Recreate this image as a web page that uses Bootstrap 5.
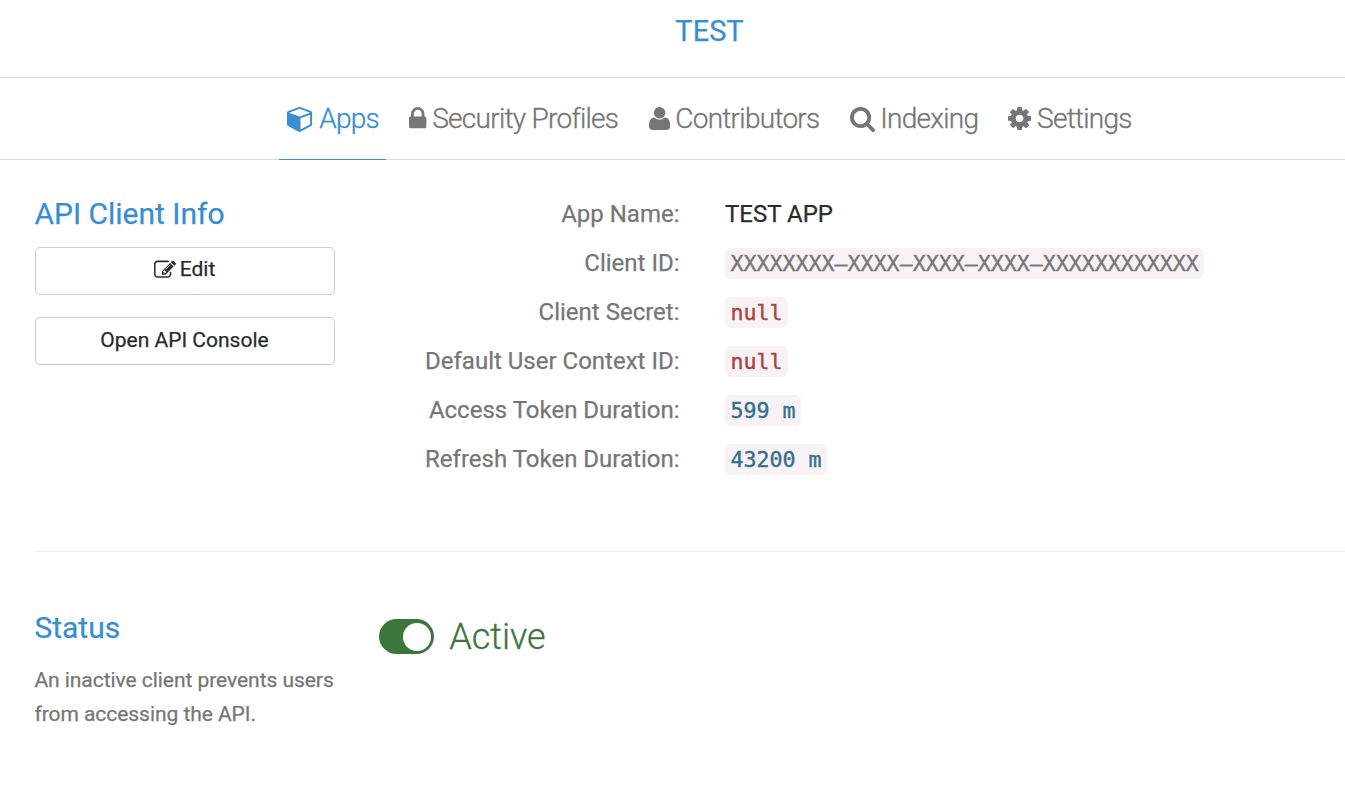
<!DOCTYPE html>
<html lang="en">
<head>
<meta charset="utf-8">
<meta name="viewport" content="width=device-width, initial-scale=1">
<title>API Client Info</title>
<link href="https://cdn.jsdelivr.net/npm/bootstrap@5.3.0/dist/css/bootstrap.min.css" rel="stylesheet">
<style>
body{font-family:Roboto,"Liberation Sans",sans-serif;color:#767676;font-size:24px;-webkit-text-stroke:.25px}
.topbar{height:78px;border-bottom:1px solid #ddd;padding-left:74px;padding-top:1px;font-size:29px;line-height:61px}
.brand,.side h2{color:#388ed1}
.tabs{height:82px;border-bottom:1px solid #ddd;padding-left:279px;gap:15.5px;font-weight:300;font-size:28px;letter-spacing:-.72px;-webkit-text-stroke:.35px}
.tabs .nav-link{color:#767676;padding:0 7px 0 8px;height:82px;gap:5.5px;white-space:nowrap;border-bottom:1px solid transparent}
.tabs .nav-link.active{color:#388ed1;border-bottom-color:#388ed1}
.glyph{fill:currentColor;flex:none;height:27px;stroke:none}
.tabs .glyph{margin-left:-.3px}
.page-body{padding-left:35px}
.side{width:300px;flex:none}
.side h2{font-size:30px;font-weight:400;line-height:36px;margin:0 0 0 -.6px}
.side p{font-size:21px;line-height:34px;letter-spacing:-.05px;margin:17px 0 0 -.6px;white-space:nowrap}
.client-info{height:392px;border-bottom:1px solid #eee}
.client-info .side{padding-top:36px}
.btn-plain{border:1px solid #ccc;border-radius:5px;height:48px;font-size:21px;padding:0 1px 0 0;color:#2b2b2b;background:#fff;-webkit-text-stroke:.25px}
.btn-edit{padding-bottom:2px}
.btn-stack{gap:22px;margin-top:15px}
.details{padding-top:29px;margin:0}
.info-row{height:49px}
.info-row dt{width:344.5px;font-weight:400}
.info-row dd{margin:0 0 0 45.5px}
.info-row code{font-family:"DejaVu Sans Mono","Liberation Mono",monospace;font-size:21.61px;line-height:31px;height:31px;display:block;padding:0 5.5px;border-radius:6px;background:#f8f2f4;margin-top:1px;-webkit-text-stroke:.4px}
.c-gray{color:#767676}.c-red{color:#a94442}.c-blue{color:#31708f}.c-dark{color:#2b2b2b}
.status{padding-top:58px}
.switch-row{color:#3c763d;margin-left:44.3px;gap:15px;font-size:36px;font-weight:300;height:54px;-webkit-text-stroke:.3px}
.pill{width:55px;height:35px;border-radius:18px;background:#3c763d;padding:3.5px 3px 3px 24px;margin-bottom:1px}
.knob{width:28px;height:28px;border-radius:50%;background:#fff}
</style>
</head>
<body>
<header class="topbar brand text-center">TEST</header>
<nav class="nav tabs flex-nowrap">
<a class="nav-link active d-flex align-items-center" href="#"><svg class="glyph" width="27" viewBox="0 0 1792 1792"><path d="M896 1629l640-349v-636l-640 233v752zm-64-865l698-254-698-254-698 254zm832-252v768q0 35-18 65t-49 47l-704 384q-28 16-61 16t-61-16l-704-384q-31-17-49-47t-18-65v-768q0-40 23-73t61-47l704-256q22-8 44-8t44 8l704 256q38 14 61 47t23 73z"/></svg><span>Apps</span></a>
<a class="nav-link d-flex align-items-center" href="#"><svg class="glyph" width="17.4" viewBox="320 0 1152 1792"><path d="M640 768h512v-192q0-106-75-181t-181-75-181 75-75 181v192zm832 96v576q0 40-28 68t-68 28h-960q-40 0-68-28t-28-68v-576q0-40 28-68t68-28h32v-192q0-184 132-316t316-132 316 132 132 316v192h32q40 0 68 28t28 68z"/></svg><span>Security Profiles</span></a>
<a class="nav-link d-flex align-items-center" href="#"><svg class="glyph" width="21.2" viewBox="192 0 1408 1792"><path d="M1600 1405q0 120-73 189.5t-194 69.5h-874q-121 0-194-69.5t-73-189.5q0-53 3.5-103.5t14-109 26.5-108.5 43-97.5 62-81 85.5-53.5 111.5-20q9 0 42 21.5t74.5 48 108 48 133.5 21.5 133.5-21.5 108-48 74.5-48 42-21.5q61 0 111.5 20t85.5 53.5 62 81 43 97.5 26.5 108.5 14 109 3.5 103.5zm-320-893q0 159-112.5 271.5t-271.5 112.5-271.5-112.5-112.5-271.5 112.5-271.5 271.5-112.5 271.5 112.5 112.5 271.5z"/></svg><span>Contributors</span></a>
<a class="nav-link d-flex align-items-center" href="#"><svg class="glyph" width="25" viewBox="64 0 1664 1792"><path d="M1216 832q0-185-131.5-316.5t-316.5-131.5-316.5 131.5-131.5 316.5 131.5 316.5 316.5 131.5 316.5-131.5 131.5-316.5zm512 832q0 52-38 90t-90 38q-54 0-90-38l-343-342q-179 124-399 124-143 0-273.5-55.5t-225-150-150-225-55.5-273.5 55.5-273.5 150-225 225-150 273.5-55.5 273.5 55.5 225 150 150 225 55.5 273.5q0 220-124 399l343 343q37 37 37 90z"/></svg><span>Indexing</span></a>
<a class="nav-link d-flex align-items-center" href="#"><svg class="glyph" width="23.1" viewBox="128 0 1536 1792"><path d="M1152 896q0-106-75-181t-181-75-181 75-75 181 75 181 181 75 181-75 75-181zm512-109v222q0 12-8 23t-20 13l-185 28q-19 54-39 91 35 50 107 138 10 12 10 25t-9 23q-27 37-99 108t-94 71q-12 0-26-9l-138-108q-44 23-91 38-16 136-29 186-7 28-36 28h-222q-14 0-24.5-8.5t-11.5-21.5l-28-184q-49-16-90-37l-141 107q-10 9-25 9-14 0-25-11-126-114-165-168-7-10-7-23 0-12 8-23 15-21 51-66.5t54-70.5q-27-50-41-99l-183-27q-13-2-21-12.5t-8-23.5v-222q0-12 8-23t19-13l186-28q14-46 39-92-40-57-107-138-10-12-10-24 0-10 9-23 26-36 98.5-107.5t94.5-71.5q13 0 26 10l138 107q44-23 91-38 16-136 29-186 7-28 36-28h222q14 0 24.5 8.5t11.5 21.5l28 184q49 16 90 37l142-107q9-9 24-9 13 0 25 10 129 119 165 170 7 8 7 22 0 12-8 23-15 21-51 66.5t-54 70.5q26 50 41 98l183 28q13 2 21 12.5t8 23.5z"/></svg><span>Settings</span></a>
</nav>
<main class="page-body">
<section class="client-info d-flex">
<div class="side"><h2>API Client Info</h2>
<div class="btn-stack d-grid">
<button class="btn btn-plain btn-edit d-flex align-items-center justify-content-center"><svg class="glyph me-1" style="height:22px" width="22" viewBox="0 0 1792 1792"><path d="M888 1184l116-116-152-152-116 116v56h96v96h56zm440-720q-16-16-33 1l-350 350q-17 17-1 33t33-1l350-350q17-17 1-33zm80 594v190q0 119-84.5 203.5t-203.5 84.5h-832q-119 0-203.5-84.5t-84.5-203.5v-832q0-119 84.5-203.5t203.5-84.5h832q63 0 117 25 15 7 18 23 3 17-9 29l-49 49q-14 14-32 8-23-6-45-6h-832q-66 0-113 47t-47 113v832q0 66 47 113t113 47h832q66 0 113-47t47-113v-126q0-13 9-22l64-64q15-15 35-7t20 29zm-96-738l288 288-672 672h-288v-288zm444 132l-92 92-288-288 92-92q28-28 68-28t68 28l152 152q28 28 28 68t-28 68z"/></svg><span>Edit</span></button>
<button class="btn btn-plain">Open API Console</button>
</div></div>
<dl class="details">
<div class="info-row d-flex align-items-center"><dt class="text-end">App Name:</dt><dd class="c-dark">TEST APP</dd></div>
<div class="info-row d-flex align-items-center"><dt class="text-end">Client ID:</dt><dd><code class="c-gray">XXXXXXXX–XXXX–XXXX–XXXX–XXXXXXXXXXXX</code></dd></div>
<div class="info-row d-flex align-items-center"><dt class="text-end">Client Secret:</dt><dd><code class="c-red">null</code></dd></div>
<div class="info-row d-flex align-items-center"><dt class="text-end">Default User Context ID:</dt><dd><code class="c-red">null</code></dd></div>
<div class="info-row d-flex align-items-center"><dt class="text-end">Access Token Duration:</dt><dd><code class="c-blue">599 m</code></dd></div>
<div class="info-row d-flex align-items-center"><dt class="text-end">Refresh Token Duration:</dt><dd><code class="c-blue">43200 m</code></dd></div>
</dl>
</section>
<section class="status d-flex">
<div class="side"><h2>Status</h2><p>An inactive client prevents users<br>from accessing the API.</p></div>
<div class="switch-row d-flex align-items-center"><div class="pill" role="switch" aria-checked="true"><div class="knob"></div></div><span>Active</span></div>
</section>
</main>
<script src="https://cdn.jsdelivr.net/npm/bootstrap@5.3.0/dist/js/bootstrap.bundle.min.js"></script>
</body>
</html>
